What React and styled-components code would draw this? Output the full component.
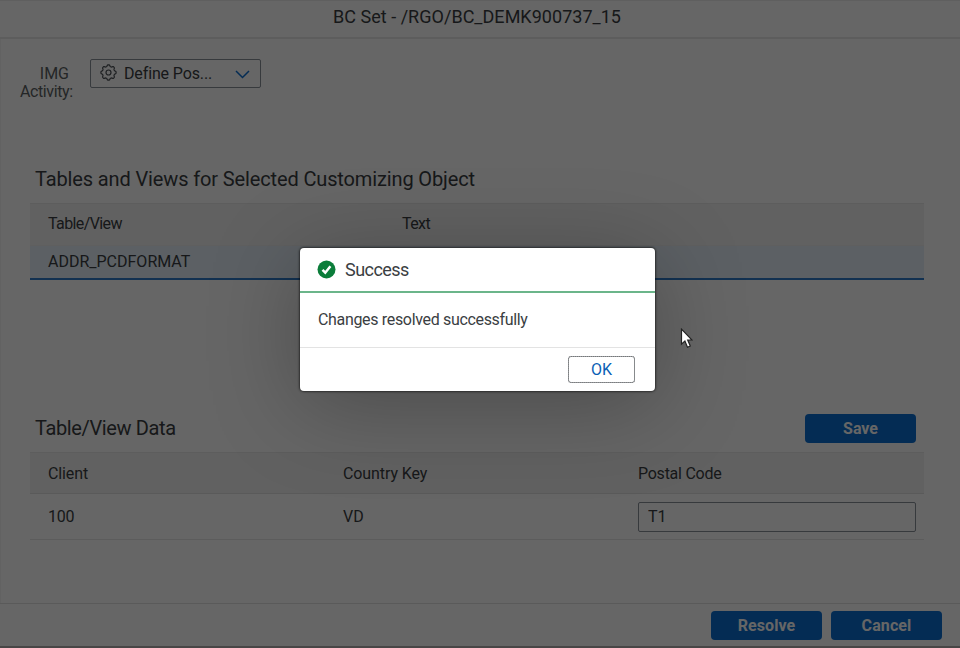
import React from "react";
import styled, { createGlobalStyle } from "styled-components";

const Global = createGlobalStyle`
  * { box-sizing: border-box; }
  body { margin: 0; overflow: hidden; background: #fff; }
  button, input { font-family: inherit; }
`;

const Page = styled.div`
  position: relative;
  display: flex;
  flex-direction: column;
  width: 960px;
  height: 648px;
  overflow: hidden;
  background: #fff;
  color: #3a3e42;
  font-family: Roboto, "Liberation Sans", sans-serif;
  font-size: 16px;
`;

const Label = styled.span`
  white-space: nowrap;
  letter-spacing: ${(p) => p.$track || 0}px;
`;

const TitleBar = styled.header`
  display: flex;
  justify-content: center;
  height: 39px;
  padding-top: 6px;
  padding-right: 6px;
  border-top: 1px solid #eee;
  border-bottom: 2px solid #e8e8e8;
  font-size: 18px;
  line-height: 20px;
`;

const Content = styled.main`
  flex: 1;
  padding: 20px 36px 0 19px;
  border-left: 1px solid #f5f5f5;
`;

const Field = styled.div`
  display: flex;
  align-items: flex-start;
  height: 105px;
`;

const FieldLabel = styled.label`
  width: 70px;
  padding: 6px 18px 0 0;
  text-align: right;
  line-height: 18px;
  color: #5b5f63;
  white-space: nowrap;
`;

const LabelLine = styled.div`
  margin-right: ${(p) => p.$inset || 0}px;
  letter-spacing: ${(p) => p.$track || 0}px;
`;

const Select = styled.div`
  display: flex;
  align-items: center;
  width: 171px;
  height: 29px;
  padding: 0 10px 0 9px;
  border: 1.5px solid #89919a;
  border-radius: 2px;
  svg { flex: none; }
  svg:first-child { margin-top: -3px; }
  svg:last-child { margin-left: auto; margin-top: 2px; }
  span { margin-left: 7px; }
`;

const Section = styled.section`
  margin-left: 10px;
  height: ${(p) => p.$height}px;
`;

const SectionHead = styled.div`
  display: flex;
  align-items: center;
  justify-content: space-between;
  height: 39px;
  padding: 1px 8px 10px 5px;
  h2 { margin: 0; font-size: 20px; font-weight: 400; line-height: 24px; }
`;

const Row = styled.div`
  display: grid;
  grid-template-columns: ${(p) => p.$columns};
  align-items: center;
  height: ${(p) => p.$height}px;
  padding: 0 8px 0 18px;
  border-bottom: 1px solid #e5e5e5;
`;

const HeadRow = styled(Row)`
  padding-bottom: ${(p) => (p.$plain ? 3 : 0)}px;
  background: #f2f2f2;
  border-top: 1px solid #e8e8e8;
  border-bottom-color: ${(p) => (p.$plain ? "#ededed" : "#e0e0e0")};
`;

const SelectedRow = styled(Row)`
  padding-bottom: 2px;
  background: #e5f0fa;
  border-bottom: 2px solid #2f7cca;
`;

const Input = styled.input`
  width: 278px;
  height: 30px;
  padding: 0 9px;
  border: 1.5px solid #89919a;
  border-radius: 2px;
  background: #fff;
  color: #3a3e42;
  font-size: 16px;
`;

const PrimaryButton = styled.button`
  width: 111px;
  height: 29px;
  padding: 0;
  border: 0;
  border-radius: 4px;
  background: #0a6ed1;
  color: #fff;
  font-size: 16px;
  font-weight: 700;
`;

const Footer = styled.footer`
  display: flex;
  justify-content: flex-end;
  gap: 9px;
  height: 45px;
  padding: 7px 18px 0 0;
  border-top: 1px solid #e0e0e0;
  border-bottom: 2px solid #b5b0b0;
`;

const Overlay = styled.div`
  position: absolute;
  inset: 0;
  background: rgba(0, 0, 0, 0.6);
`;

const Dialog = styled.div`
  position: absolute;
  left: 300px;
  top: 248px;
  display: flex;
  flex-direction: column;
  width: 355px;
  height: 143px;
  overflow: hidden;
  border-radius: 4px;
  background: #fff;
  box-shadow: 0 0 2px 1px rgba(0, 0, 0, 0.5), 0 14px 90px rgba(0, 0, 0, 0.27);
`;

const DialogHead = styled.div`
  display: flex;
  align-items: center;
  gap: 9px;
  height: 45px;
  padding-left: 17px;
  border-bottom: 2px solid #6bb58a;
  font-size: 18px;
`;

const DialogBody = styled.div`
  display: flex;
  align-items: center;
  height: 54px;
  padding: 0 0 2px 18px;
`;

const DialogFoot = styled.div`
  display: flex;
  justify-content: flex-end;
  flex: 1;
  padding: 8px 20px 0 0;
  border-top: 1px solid #e3e3e3;
`;

const OkButton = styled.button`
  width: 67px;
  height: 27px;
  padding: 0;
  border: 1px solid #999ea3;
  border-radius: 3px;
  background: #fff;
  color: #0a5fb5;
  font-size: 16px;
  outline: 1px dotted #777;
  outline-offset: -1px;
`;

const Cursor = styled.svg`
  position: absolute;
  left: 680px;
  top: 328px;
`;

const gearPath = (() => {
  const pts = [];
  for (let i = 0; i < 72; i++) {
    const a = (i / 72) * Math.PI * 2;
    const r = 6.9 + 0.75 * Math.tanh(2 * Math.cos(a * 8));
    pts.push(`${(8.5 + r * Math.sin(a)).toFixed(2)} ${(8.5 - r * Math.cos(a)).toFixed(2)}`);
  }
  return `M${pts.join("L")}Z`;
})();

const GearIcon = () => (
  <svg width="17" height="17" viewBox="0 0 17 17" fill="none" stroke="#4d5257" strokeWidth="1.2">
    <path d={gearPath} />
    <circle cx="8.5" cy="8.5" r="2.5" />
  </svg>
);

const ChevronIcon = () => (
  <svg width="15" height="9" viewBox="0 0 15 9" fill="none" stroke="#0a6ed1" strokeWidth="1.5">
    <path d="M1 1l6.5 6.5L14 1" />
  </svg>
);

const SuccessIcon = () => (
  <svg width="19" height="19" viewBox="0 0 19 19">
    <circle cx="9.5" cy="9.5" r="9" fill="#0b7d3a" />
    <path d="M5.5 9.8l2.8 2.9 5.1-6.4" fill="none" stroke="#fff" strokeWidth="2.5" />
  </svg>
);

export default function App() {
  return (
    <Page>
      <Global />
      <TitleBar>
        <Label $track={0.03}>BC Set - /RGO/BC_DEMK900737_15</Label>
      </TitleBar>
      <Content>
        <Field>
          <FieldLabel>
            <LabelLine $inset={3}>IMG</LabelLine>
            <LabelLine $track={-0.4}>Activity:</LabelLine>
          </FieldLabel>
          <Select>
            <GearIcon />
            <Label $track={-0.13}>Define Pos...</Label>
            <ChevronIcon />
          </Select>
        </Field>
        <Section $height={249}>
          <SectionHead>
            <h2><Label $track={-0.13}>Tables and Views for Selected Customizing Object</Label></h2>
          </SectionHead>
          <HeadRow $height={43} $columns="354px 1fr" $plain>
            <Label $track={-0.6}>Table/View</Label>
            <Label $track={-0.6}>Text</Label>
          </HeadRow>
          <SelectedRow $height={34} $columns="354px 1fr">
            <Label>ADDR_PCDFORMAT</Label>
          </SelectedRow>
        </Section>
        <Section $height={140}>
          <SectionHead>
            <h2><Label $track={-0.37}>Table/View Data</Label></h2>
            <PrimaryButton><Label>Save</Label></PrimaryButton>
          </SectionHead>
          <HeadRow $height={42} $columns="295px 295px 1fr">
            <Label $track={-0.12}>Client</Label>
            <Label $track={-0.1}>Country Key</Label>
            <Label $track={-0.25}>Postal Code</Label>
          </HeadRow>
          <Row $height={46} $columns="295px 295px 1fr">
            <Label $track={-0.2}>100</Label>
            <Label>VD</Label>
            <Input defaultValue="T1" />
          </Row>
        </Section>
      </Content>
      <Footer>
        <PrimaryButton><Label $track={0.1}>Resolve</Label></PrimaryButton>
        <PrimaryButton><Label $track={0.1}>Cancel</Label></PrimaryButton>
      </Footer>
      <Overlay>
        <Dialog role="dialog">
          <DialogHead>
            <SuccessIcon />
            <Label $track={-0.55}>Success</Label>
          </DialogHead>
          <DialogBody><Label $track={-0.33}>Changes resolved successfully</Label></DialogBody>
          <DialogFoot>
            <OkButton><Label>OK</Label></OkButton>
          </DialogFoot>
        </Dialog>
        <Cursor width="13" height="21" viewBox="0 0 13 21">
          <path d="M1.5 1.2V16.2L4.9 13L7.5 19.2L10.3 18L7.7 12H12Z" fill="#fff" stroke="#222" strokeWidth="1.2" />
        </Cursor>
      </Overlay>
    </Page>
  );
}
